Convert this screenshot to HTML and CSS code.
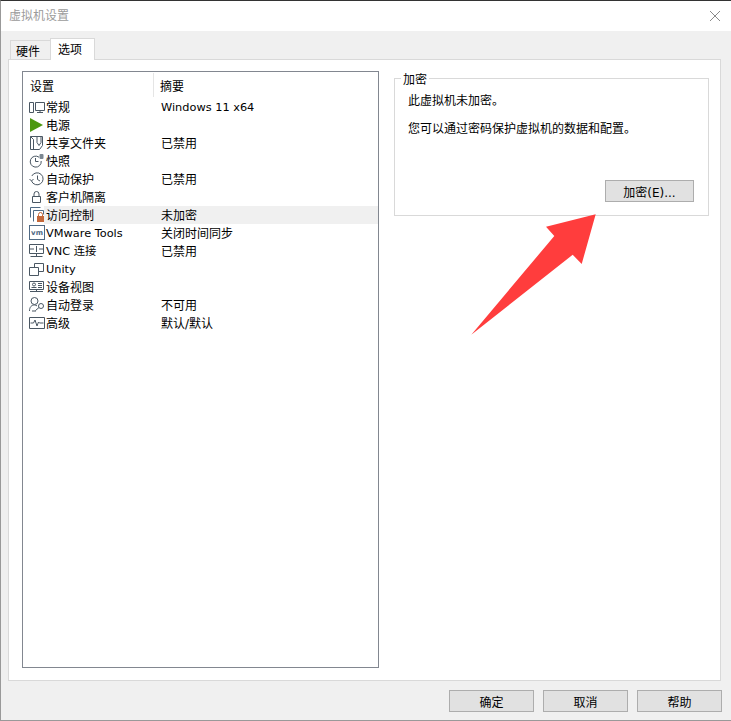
FILE: index.html
```html
<!DOCTYPE html>
<html lang="zh-CN">
<head>
<meta charset="utf-8">
<title>虚拟机设置</title>
<link rel="stylesheet" href="styles.css">
</head>
<body>
<div class="window">
  <header class="titlebar">
    <span class="title">虚拟机设置</span>
    <svg class="close" width="12" height="12" viewBox="0 0 12 12"><path d="M1 1L11 11M11 1L1 11" stroke="#8a8a8a" stroke-width="1" fill="none"/></svg>
  </header>
  <div class="tabs">
    <div class="tab">硬件</div>
    <div class="tab tab-active">选项</div>
  </div>
  <main class="panel">
    <section class="list">
      <div class="list-head">
        <div class="head-a">设置</div>
        <div class="head-b">摘要</div>
      </div>
      <div class="row">
        <svg class="ico" viewBox="0 0 16 18"><g fill="none" stroke="#4a5763"><path d="M.5 4.500h4v10h-4zM6.500 4.500h9v8h-9zM11 12.500v2M8 14.500h6"/></g></svg>
        <span class="name">常规</span><span class="sum latin">Windows 11 x64</span>
      </div>
      <div class="row">
        <svg class="ico" viewBox="0 0 16 18"><path d="M1 2L14 9L1 16z" fill="#4c980f"/></svg>
        <span class="name">电源</span><span class="sum"></span>
      </div>
      <div class="row">
        <svg class="ico" viewBox="0 0 16 18"><g fill="none" stroke="#4a5763"><path d="M1.500 2.500h12v9l-3 4h-9zM1.500 2.500l3 3v10M8 2.500v6l2 3 2-3v-6"/></g></svg>
        <span class="name">共享文件夹</span><span class="sum">已禁用</span>
      </div>
      <div class="row">
        <svg class="ico" viewBox="0 0 16 18"><g fill="none" stroke="#4a5763"><path d="M10 5.200A5.500 5.500 0 1 0 12.200 9M6.500 6v3.500h3"/></g><rect x="10.500" y="2" width="4" height="5" rx="1" fill="#7b8791"/></svg>
        <span class="name">快照</span><span class="sum"></span>
      </div>
      <div class="row">
        <svg class="ico" viewBox="0 0 16 18"><g fill="none" stroke="#4a5763"><path d="M2.800 6A6 6 0 1 1 2.500 11M8.500 5.500v4l2.500 1.500"/><path d="M.5 9l2 2 2-2" /></g></svg>
        <span class="name">自动保护</span><span class="sum">已禁用</span>
      </div>
      <div class="row">
        <svg class="ico" viewBox="0 0 16 18"><g fill="none" stroke="#4a5763"><path d="M3.500 8.500h8v6h-8zM5 8.500V6a2.500 2.500 0 0 1 5 0v2.500"/></g></svg>
        <span class="name">客户机隔离</span><span class="sum"></span>
      </div>
      <div class="row row-selected">
        <svg class="ico" viewBox="0 0 16 18"><g fill="none" stroke="#4f6a85"><path d="M1.500 11.500v-10h10M4.500 15.500v-11h10v4"/></g><rect x="8" y="10" width="7" height="6" fill="#c4683a"/><path d="M9.500 10V8.500a2 2 0 0 1 4 0V10" fill="none" stroke="#c4683a"/></svg>
        <span class="name">访问控制</span><span class="sum">未加密</span>
      </div>
      <div class="row">
        <svg class="ico" viewBox="0 0 16 18"><rect x=".5" y="1.500" width="15" height="14" fill="none" stroke="#4f6a85"/><text x="8" y="10.500" class="vm-text">vm</text></svg>
        <span class="name latin">VMware Tools</span><span class="sum">关闭时间同步</span>
      </div>
      <div class="row">
        <svg class="ico" viewBox="0 0 16 18"><g fill="none" stroke="#4a5763"><path d="M.5 2.500h14v9H.5zM7.500 11.500v3M1.500 14.500h12M1 7h4M10 7h4M7.500 4v6"/></g></svg>
        <span class="name latin">VNC 连接</span><span class="sum">已禁用</span>
      </div>
      <div class="row">
        <svg class="ico" viewBox="0 0 16 18"><g fill="none" stroke="#4a5763"><path d="M.5 7.500h9v8h-9zM5.500 7.500v-4h9v8h-5"/></g></svg>
        <span class="name latin">Unity</span><span class="sum"></span>
      </div>
      <div class="row">
        <svg class="ico" viewBox="0 0 16 18"><g fill="none" stroke="#4a5763"><path d="M.5 3.500h14v8H.5zM7.500 11.500v2M1 13.500h13M9 5.500h4M9 7.500h4M9 9.500h4"/><circle cx="5" cy="6.500" r="1.500"/><path d="M2.500 9.500h5"/></g></svg>
        <span class="name">设备视图</span><span class="sum"></span>
      </div>
      <div class="row">
        <svg class="ico" viewBox="0 0 16 18"><g fill="none" stroke="#4a5763"><circle cx="5.500" cy="5" r="3.500"/><path d="M.5 15c0-4 2-6 5-6 1 0 2 .3 2.500 1M3 15h4"/><circle cx="12" cy="10" r="2.500"/><path d="M10 11.500l-3.500 3"/></g></svg>
        <span class="name">自动登录</span><span class="sum">不可用</span>
      </div>
      <div class="row">
        <svg class="ico" viewBox="0 0 16 18"><g fill="none" stroke="#4a5763"><path d="M.5 3.500h15v11H.5zM1.500 9h3l1.500-3 2 6 1.500-4 1 1h4"/></g></svg>
        <span class="name">高级</span><span class="sum">默认/默认</span>
      </div>
    </section>
    <section class="group">
      <div class="group-label">加密</div>
      <p class="line-1">此虚拟机未加密。</p>
      <p class="line-2">您可以通过密码保护虚拟机的数据和配置。</p>
      <div class="group-actions"><button class="btn btn-wide">加密(E)...</button></div>
    </section>
  </main>
  <footer class="footer">
    <button class="btn">确定</button>
    <button class="btn">取消</button>
    <button class="btn">帮助</button>
  </footer>
  <svg class="arrow" width="731" height="721" viewBox="0 0 731 721"><polygon points="595.700,214.300 546,226.700 554.300,236 471.300,334.700 572.700,254.700 581.700,264" fill="#ff3d3d"/></svg>
</div>
</body>
</html>
```
FILE: styles.css
```css
* { box-sizing: border-box; }
html, body { margin: 0; padding: 0; }
body {
  width: 731px;
  height: 721px;
  overflow: hidden;
  font-family: "DejaVu Sans", "Noto Sans CJK SC", sans-serif;
  font-size: 12px;
  color: #000;
  background: #f0f0f0;
}
.window {
  position: relative;
  width: 731px;
  height: 721px;
  display: flex;
  flex-direction: column;
  background: #f0f0f0;
  border-top: 1px solid #333;
  border-left: 1px solid #999;
  border-bottom: 1px solid #999;
}
.titlebar {
  height: 30px;
  flex: none;
  display: flex;
  align-items: center;
  justify-content: space-between;
  padding: 0 10px 1px 8px;
  background: #fff;
}
.title { color: #9b9b9b; line-height: 16px; }
.tabs {
  height: 28px;
  flex: none;
  display: flex;
  align-items: flex-end;
  padding-left: 9px;
  position: relative;
  z-index: 1;
}
.tab {
  width: 40px;
  height: 19px;
  padding: 2px 0 0 5px;
  border: 1px solid #d9d9d9;
  border-right: 0;
  border-bottom: 0;
  line-height: 19px;
  background: #f0f0f0;
}
.tab-active {
  width: 45px;
  height: 22px;
  padding: 1px 0 0 7px;
  margin-bottom: -1px;
  border-right: 1px solid #d9d9d9;
  background: #fff;
  line-height: 20px;
}
.panel {
  width: 713px;
  height: 622px;
  flex: none;
  margin-left: 7px;
  display: flex;
  gap: 15px;
  padding: 11px 0 12px 13px;
  background: #fff;
  border: 1px solid #d9d9d9;
}
.list {
  width: 357px;
  flex: none;
  border: 1px solid #828790;
  background: #fff;
  padding-top: 1px;
}
.list-head {
  height: 24px;
  display: flex;
  margin-bottom: 1px;
}
.head-a {
  width: 131px;
  padding: 6px 0 0 7px;
  border-right: 1px solid #e5e5e5;
  line-height: 16px;
}
.head-b { padding: 6px 0 0 6px; line-height: 16px; }
.row {
  height: 18px;
  display: flex;
  align-items: flex-start;
  padding-left: 6px;
  position: relative;
}
.row-selected::before {
  content: "";
  position: absolute;
  left: 21px;
  right: 0;
  top: 0;
  bottom: 0;
  background: #f0f0f0;
}
.ico {
  width: 16px;
  height: 18px;
  flex: none;
  position: relative;
}
.name {
  width: 115px;
  flex: none;
  margin-left: 1px;
  padding-top: 1px;
  position: relative;
  white-space: nowrap;
  line-height: 18px;
}
.sum {
  position: relative;
  padding-top: 1px;
  white-space: nowrap;
  line-height: 18px;
}
.latin { font-size: 11.33px; padding-top: 0; }
.vm-text {
  font-size: 7px;
  font-weight: 700;
  fill: #4f6a85;
  text-anchor: middle;
}
.group {
  width: 315px;
  height: 138px;
  margin-top: 7px;
  flex: none;
  position: relative;
  border: 1px solid #d9d9d9;
  padding: 13px 13px 0 13px;
  display: flex;
  flex-direction: column;
}
.group-label {
  position: absolute;
  left: 6px;
  top: -7px;
  padding: 0 2px;
  background: #fff;
  line-height: 16px;
}
.group p { margin: 0; line-height: 18px; }
.line-2 { margin-top: 10px !important; }
.group-actions {
  margin-top: 42px;
  display: flex;
  justify-content: flex-end;
}
.btn {
  width: 85px;
  height: 22px;
  padding: 0;
  font: inherit;
  color: #000;
  background: #e1e1e1;
  border: 1px solid #adadad;
}
.btn-wide { width: 89px; margin-right: 1px; }
.footer {
  flex: none;
  display: flex;
  justify-content: flex-end;
  gap: 9px;
  padding: 9px 9px 0 0;
}
.arrow {
  position: absolute;
  left: -1px;
  top: -1px;
  pointer-events: none;
  z-index: 2;
}
```
